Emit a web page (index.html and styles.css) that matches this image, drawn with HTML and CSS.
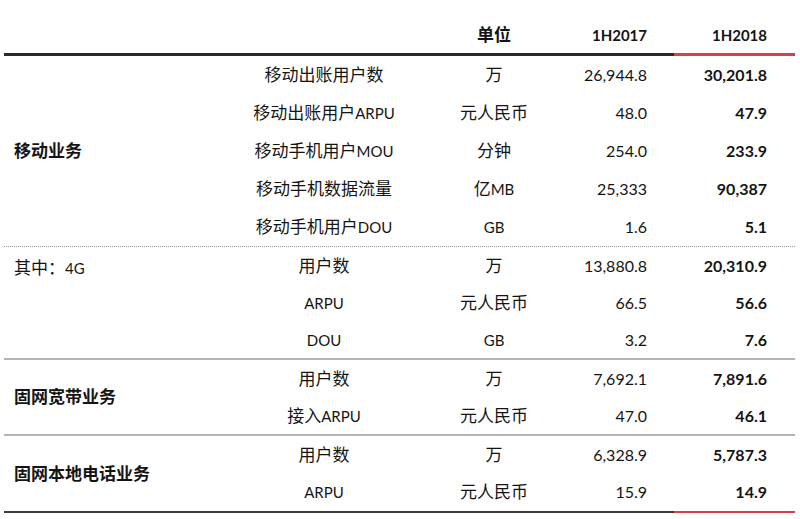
FILE: index.html
```html
<!DOCTYPE html>
<html lang="zh">
<head>
<meta charset="utf-8">
<link rel="stylesheet" href="styles.css">
</head>
<body>
<div class="table">
  <div class="head">
    <div class="h c1"></div>
    <div class="h c2"></div>
    <div class="h c3">单位</div>
    <div class="h c4">1H2017</div>
    <div class="h c5">1H2018</div>
  </div>

  <div class="sec dotted">
    <div class="cat bold"><span>移动业务</span></div>
    <div class="rows">
      <div class="row"><div class="c2">移动出账用户数</div><div class="c3">万</div><div class="c4">26,944.8</div><div class="c5">30,201.8</div></div>
      <div class="row"><div class="c2">移动出账用户<span class="en">ARPU</span></div><div class="c3">元人民币</div><div class="c4">48.0</div><div class="c5">47.9</div></div>
      <div class="row"><div class="c2">移动手机用户<span class="en">MOU</span></div><div class="c3">分钟</div><div class="c4">254.0</div><div class="c5">233.9</div></div>
      <div class="row"><div class="c2">移动手机数据流量</div><div class="c3">亿<span class="en">MB</span></div><div class="c4">25,333</div><div class="c5">90,387</div></div>
      <div class="row"><div class="c2">移动手机用户<span class="en">DOU</span></div><div class="c3"><span class="en">GB</span></div><div class="c4">1.6</div><div class="c5">5.1</div></div>
    </div>
  </div>

  <div class="sec solid tight">
    <div class="cat top"><span>其中：<span class="en">4G</span></span></div>
    <div class="rows">
      <div class="row"><div class="c2">用户数</div><div class="c3">万</div><div class="c4">13,880.8</div><div class="c5">20,310.9</div></div>
      <div class="row"><div class="c2"><span class="en">ARPU</span></div><div class="c3">元人民币</div><div class="c4">66.5</div><div class="c5">56.6</div></div>
      <div class="row"><div class="c2"><span class="en">DOU</span></div><div class="c3"><span class="en">GB</span></div><div class="c4">3.2</div><div class="c5">7.6</div></div>
    </div>
  </div>

  <div class="sec solid tight">
    <div class="cat bold"><span>固网宽带业务</span></div>
    <div class="rows">
      <div class="row"><div class="c2">用户数</div><div class="c3">万</div><div class="c4">7,692.1</div><div class="c5">7,891.6</div></div>
      <div class="row"><div class="c2">接入<span class="en">ARPU</span></div><div class="c3">元人民币</div><div class="c4">47.0</div><div class="c5">46.1</div></div>
    </div>
  </div>

  <div class="sec last">
    <div class="cat bold"><span>固网本地电话业务</span></div>
    <div class="rows">
      <div class="row"><div class="c2">用户数</div><div class="c3">万</div><div class="c4">6,328.9</div><div class="c5">5,787.3</div></div>
      <div class="row"><div class="c2"><span class="en">ARPU</span></div><div class="c3">元人民币</div><div class="c4">15.9</div><div class="c5">14.9</div></div>
    </div>
  </div>
  <div class="foot">
    <div class="fblack"></div>
    <div class="fred"></div>
  </div>
</div>
</body>
</html>
```

FILE: styles.css
```css
html, body {
  margin: 0;
  padding: 0;
  background: #ffffff;
}
body {
  font-family: "Lato", "Noto Sans CJK SC", sans-serif;
  color: #141414;
  font-size: 17px;
}
.en {
  font-size: 15px;
}
.table {
  width: 791px;
  margin-left: 4px;
}
.head {
  display: grid;
  grid-template-columns: 235px 170px 170px 95px 121px;
  height: 56px;
}
.h {
  border-bottom: 3px solid #2a2a2a;
  display: flex;
  align-items: flex-end;
  padding-bottom: 7px;
  font-weight: 700;
  font-size: 15px;
  line-height: 22px;
}
.h.c3 {
  justify-content: center;
  font-size: 17px;
}
.h.c4 {
  justify-content: flex-end;
  padding-right: 27px;
}
.h.c5 {
  justify-content: flex-end;
  padding-right: 28px;
  border-bottom-color: #d8404c;
}
.sec {
  display: flex;
}
.sec.dotted {
  border-bottom: 1px dotted #9a9a9a;
}
.sec.solid {
  border-bottom: 2px solid #b4b4b4;
}
.cat {
  width: 235px;
  flex: none;
  padding-left: 10px;
  padding-bottom: 3px;
  box-sizing: border-box;
  display: flex;
  align-items: center;
  font-size: 17px;
}
.cat.top {
  align-items: flex-start;
  padding-top: 7px;
  padding-bottom: 0;
}
.bold {
  font-weight: 700;
}
.rows {
  display: flex;
  flex-direction: column;
}
.row {
  display: grid;
  grid-template-columns: 170px 170px 95px 121px;
  height: 38px;
  align-items: center;
  line-height: 22px;
}
.tight .row {
  height: 37px;
}
.last .row {
  height: 37.5px;
}
.row .c2, .row .c3 {
  text-align: center;
  font-size: 17px;
}
.row .c2 {
  white-space: nowrap;
}
.row .c4 {
  text-align: right;
  padding-right: 27px;
  font-size: 16px;
}
.row .c5 {
  text-align: right;
  padding-right: 28px;
  font-size: 16px;
  font-weight: 700;
}
.foot {
  display: flex;
  height: 2px;
}
.fblack {
  width: 670px;
  background: #3a3a3a;
}
.fred {
  width: 121px;
  background: #d8404c;
}
```
